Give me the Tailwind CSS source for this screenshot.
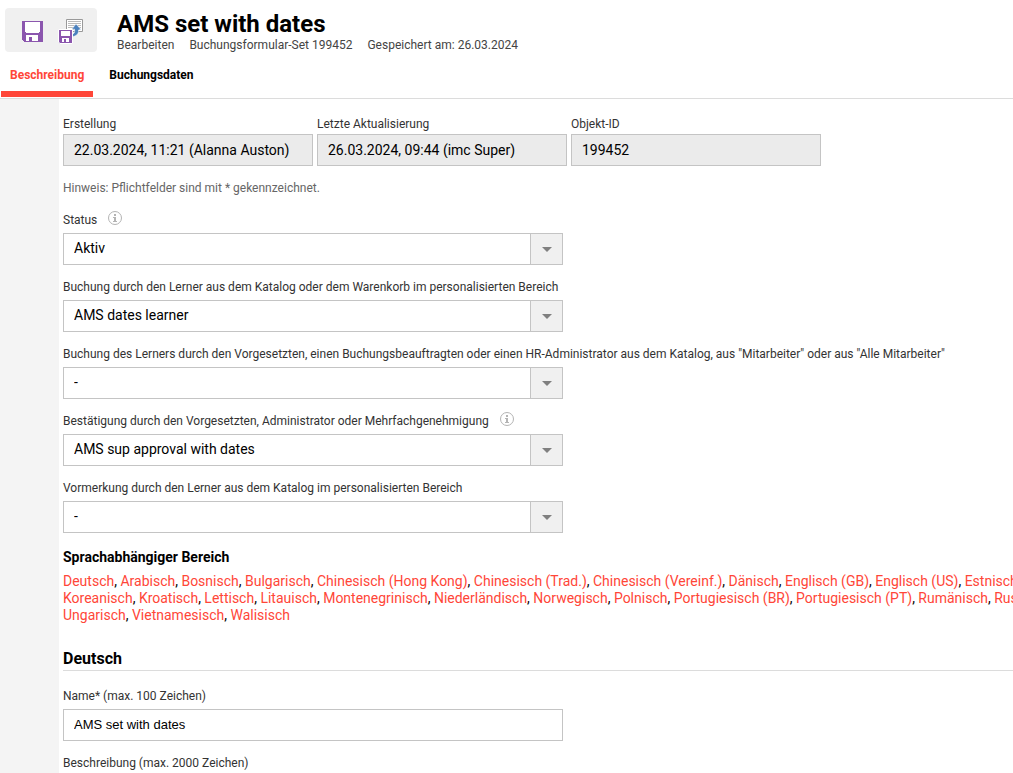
<!DOCTYPE html>
<html lang="de">
<head>
<meta charset="utf-8">
<meta name="viewport" content="width=device-width, initial-scale=1">
<title>AMS set with dates</title>
<script src="https://cdn.jsdelivr.net/npm/@tailwindcss/browser@4"></script>
</head>
<body class="flex h-screen flex-col overflow-hidden bg-white font-['Roboto',sans-serif] text-sm text-black">
<header class="shrink-0 border-b border-[#dcdcdc]">
  <div class="flex gap-5 pt-2 pl-[5px]">
    <div class="flex h-11 w-[92px] items-center rounded bg-[#f0f0f0] pl-4" role="toolbar" aria-label="Aktionen">
      <button type="button" aria-label="Speichern" class="size-6">
        <svg viewBox="0 0 24 24" class="size-6" shape-rendering="crispEdges"><path fill="#8b56ae" d="M1 3h21v21H3l-2-2z"/><path fill="#fff" d="M4 4h15v10h-1v1H5v-1H4zM5 17h12v6H5z"/><path fill="#8b56ae" d="M8 19h3v4H8z"/></svg>
      </button>
      <button type="button" aria-label="Speichern und schließen" class="ml-3.5 size-6">
        <svg viewBox="0 0 24 26" class="h-[26px] w-6 overflow-visible"><path fill="#fff" stroke="#999" d="M7.500 1.500h16v12h-16z"/><path stroke="#bbb" d="M9 3.500h13M9 5.500h13M9 7.500h13M9 9.500h13M9 11.500h10"/><path fill="#4a80bd" stroke="#fff" stroke-width=".5" d="M17 6l5 5.500-2.500.5C20 16 17 18.500 13 18.500V16c2.500 0 3-2 2.500-5L12.500 11.500z"/><path fill="#8b56ae" stroke="#fff" d="M-.5 11.500h14v14H1l-1.500-1.500z"/><path fill="#fff" d="M2 13h9v5H2zM3 20h7v4H3z"/><path fill="#8b56ae" d="M5 21h2v3H5z"/></svg>
      </button>
    </div>
    <div>
      <h1 class="text-2xl leading-8 font-bold">AMS set with dates</h1>
      <p class="-mt-0.5 flex gap-[15px] text-xs leading-3.5 text-[#444]"><span>Bearbeiten</span><span>Buchungsformular-Set 199452</span><span>Gespeichert am: 26.03.2024</span></p>
    </div>
  </div>
  <nav class="mt-2 flex gap-[7px] pb-px pl-px text-xs font-bold">
    <a href="#beschreibung" aria-current="page" class="border-b-6 border-[#ff4638] px-[9px] pt-2 pb-2 leading-[15px] text-[#ff4638]">Beschreibung</a>
    <a href="#buchungsdaten" class="px-[9px] pt-2 pb-2 leading-[15px]">Buchungsdaten</a>
  </nav>
</header>
<main class="flex min-h-0 flex-1 overflow-hidden">
  <div class="w-[59px] shrink-0 bg-[#f4f4f4]"></div>
  <form class="min-w-0 flex-1 pt-[17px] pl-1">
    <div class="flex gap-1">
      <div class="w-[250px]"><label for="created" class="block pb-0.5 text-xs text-[#333]">Erstellung</label><input id="created" readonly value="22.03.2024, 11:21 (Alanna Auston)" class="block h-8 w-full border border-[#c4c4c4] bg-[#ebebeb] px-2.5"></div>
      <div class="w-[250px]"><label for="updated" class="block pb-0.5 text-xs text-[#333]">Letzte Aktualisierung</label><input id="updated" readonly value="26.03.2024, 09:44 (imc Super)" class="block h-8 w-full border border-[#c4c4c4] bg-[#ebebeb] px-2.5"></div>
      <div class="w-[250px]"><label for="object" class="block pb-0.5 text-xs text-[#333]">Objekt-ID</label><input id="object" readonly value="199452" class="block h-8 w-full border border-[#c4c4c4] bg-[#ebebeb] px-2.5"></div>
    </div>
    <p class="mt-3.5 text-xs text-[#666]">Hinweis: Pflichtfelder sind mit * gekennzeichnet.</p>
    <div class="mt-3.5 flex flex-col gap-3 text-xs text-[#333]">
      <div>
        <div class="flex h-[23px] items-start gap-2.5"><label for="status" class="pt-0.5">Status</label><button type="button" aria-label="Info"><svg viewBox="0 0 16 16" class="size-4" fill="none" stroke="#b4b4b4"><circle cx="8" cy="8" r="6.500"/><path stroke-width="2" d="M8 4v2M8 7v4.500"/><path d="M6 7.500h2M6 11.500h4"/></svg></button></div>
        <div class="grid h-8 w-[500px] grid-cols-[1fr_32px] border border-[#c4c4c4]"><select id="status" class="col-span-2 col-start-1 row-start-1 appearance-none px-2.5 pb-0.5 text-sm text-black"><option>Aktiv</option></select><span class="pointer-events-none col-start-2 row-start-1 grid place-items-center border-l border-[#c4c4c4] bg-[#f0f0f0]"><svg viewBox="0 0 10 5" class="h-[5px] w-2.5"><path fill="#808080" d="M0 0h10L5 5z"/></svg></span></div>
      </div>
      <div>
        <div class="flex h-[23px] items-start"><label for="learner" class="pt-0.5">Buchung durch den Lerner aus dem Katalog oder dem Warenkorb im personalisierten Bereich</label></div>
        <div class="grid h-8 w-[500px] grid-cols-[1fr_32px] border border-[#c4c4c4]"><select id="learner" class="col-span-2 col-start-1 row-start-1 appearance-none px-2.5 pb-0.5 text-sm text-black"><option>AMS dates learner</option></select><span class="pointer-events-none col-start-2 row-start-1 grid place-items-center border-l border-[#c4c4c4] bg-[#f0f0f0]"><svg viewBox="0 0 10 5" class="h-[5px] w-2.5"><path fill="#808080" d="M0 0h10L5 5z"/></svg></span></div>
      </div>
      <div>
        <div class="flex h-[23px] items-start"><label for="manager" class="pt-0.5">Buchung des Lerners durch den Vorgesetzten, einen Buchungsbeauftragten oder einen HR-Administrator aus dem Katalog, aus "Mitarbeiter" oder aus "Alle Mitarbeiter"</label></div>
        <div class="grid h-8 w-[500px] grid-cols-[1fr_32px] border border-[#c4c4c4]"><select id="manager" class="col-span-2 col-start-1 row-start-1 appearance-none px-2.5 pb-0.5 text-sm text-black"><option>-</option></select><span class="pointer-events-none col-start-2 row-start-1 grid place-items-center border-l border-[#c4c4c4] bg-[#f0f0f0]"><svg viewBox="0 0 10 5" class="h-[5px] w-2.5"><path fill="#808080" d="M0 0h10L5 5z"/></svg></span></div>
      </div>
      <div>
        <div class="flex h-[23px] items-start gap-2.5"><label for="approval" class="pt-0.5">Bestätigung durch den Vorgesetzten, Administrator oder Mehrfachgenehmigung</label><button type="button" aria-label="Info"><svg viewBox="0 0 16 16" class="size-4" fill="none" stroke="#b4b4b4"><circle cx="8" cy="8" r="6.500"/><path stroke-width="2" d="M8 4v2M8 7v4.500"/><path d="M6 7.500h2M6 11.500h4"/></svg></button></div>
        <div class="grid h-8 w-[500px] grid-cols-[1fr_32px] border border-[#c4c4c4]"><select id="approval" class="col-span-2 col-start-1 row-start-1 appearance-none px-2.5 pb-0.5 text-sm text-black"><option>AMS sup approval with dates</option></select><span class="pointer-events-none col-start-2 row-start-1 grid place-items-center border-l border-[#c4c4c4] bg-[#f0f0f0]"><svg viewBox="0 0 10 5" class="h-[5px] w-2.5"><path fill="#808080" d="M0 0h10L5 5z"/></svg></span></div>
      </div>
      <div>
        <div class="flex h-[23px] items-start"><label for="reserve" class="pt-0.5">Vormerkung durch den Lerner aus dem Katalog im personalisierten Bereich</label></div>
        <div class="grid h-8 w-[500px] grid-cols-[1fr_32px] border border-[#c4c4c4]"><select id="reserve" class="col-span-2 col-start-1 row-start-1 appearance-none px-2.5 pb-0.5 text-sm text-black"><option>-</option></select><span class="pointer-events-none col-start-2 row-start-1 grid place-items-center border-l border-[#c4c4c4] bg-[#f0f0f0]"><svg viewBox="0 0 10 5" class="h-[5px] w-2.5"><path fill="#808080" d="M0 0h10L5 5z"/></svg></span></div>
      </div>
    </div>
    <h2 class="mt-3.5 font-bold">Sprachabhängiger Bereich</h2>
    <p class="mt-1.5 leading-[17px] whitespace-nowrap [&_a]:text-[#ff4638]">
      <a href="#de">Deutsch</a>, <a href="#ar">Arabisch</a>, <a href="#bs">Bosnisch</a>, <a href="#bg">Bulgarisch</a>, <a href="#hk">Chinesisch (Hong Kong)</a>, <a href="#tw">Chinesisch (Trad.)</a>, <a href="#cn">Chinesisch (Vereinf.)</a>, <a href="#da">Dänisch</a>, <a href="#gb">Englisch (GB)</a>, <a href="#us">Englisch (US)</a>, <a href="#et">Estnisch</a>,<br>
      <a href="#ko">Koreanisch</a>, <a href="#hr">Kroatisch</a>, <a href="#lv">Lettisch</a>, <a href="#lt">Litauisch</a>, <a href="#me">Montenegrinisch</a>, <a href="#nl">Niederländisch</a>, <a href="#no">Norwegisch</a>, <a href="#pl">Polnisch</a>, <a href="#br">Portugiesisch (BR)</a>, <a href="#pt">Portugiesisch (PT)</a>, <a href="#ro">Rumänisch</a>, <a href="#ru">Russisch</a>,<br>
      <a href="#hu">Ungarisch</a>, <a href="#vi">Vietnamesisch</a>, <a href="#cy">Walisisch</a>
    </p>
    <h2 class="mt-6 border-b border-[#dcdcdc] text-base leading-[22px] font-bold">Deutsch</h2>
    <label for="name" class="mt-4 block h-[22px] pt-px text-xs text-[#333]">Name* (max. 100 Zeichen)</label>
    <input id="name" value="AMS set with dates" class="block h-8 w-[500px] border border-[#c4c4c4] px-2.5 pb-0.5 font-['Liberation_Sans',sans-serif] text-[13px]">
    <label for="description" class="mt-[13px] block h-[22px] pt-px text-xs text-[#333]">Beschreibung (max. 2000 Zeichen)</label>
    <textarea id="description" class="block h-24 w-[500px] border border-[#c4c4c4] px-2.5"></textarea>
  </form>
</main>
</body>
</html>
